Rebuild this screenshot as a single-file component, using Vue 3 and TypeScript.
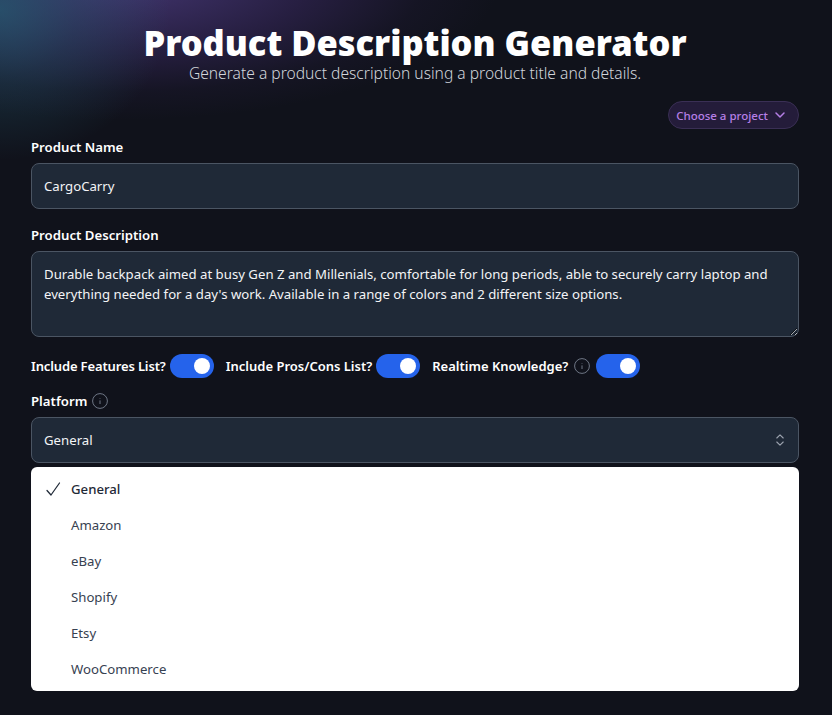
<script setup lang="ts">
const platforms = ['General', 'Amazon', 'eBay', 'Shopify', 'Etsy', 'WooCommerce']
const selected = 'General'
const description =
  "Durable backpack aimed at busy Gen Z and Millenials, comfortable for long periods, able to securely carry laptop and everything needed for a day's work. Available in a range of colors and 2 different size options."
</script>

<template>
  <div class="page">
    <header class="head">
      <h1>Product Description Generator</h1>
      <p>Generate a product description using a product title and details.</p>
    </header>

    <div class="project-row">
      <button type="button" class="project">
        <span>Choose a project</span>
        <svg width="14" height="14" viewBox="0 0 14 14" fill="none" stroke="currentColor" stroke-width="1.5" stroke-linecap="round" stroke-linejoin="round">
          <path d="M3 5 7 9 11 5" />
        </svg>
      </button>
    </div>

    <label class="label">Product Name</label>
    <input class="field" type="text" value="CargoCarry" />

    <label class="label second">Product Description</label>
    <textarea class="field area" :value="description" />

    <div class="toggles">
      <span class="toggle-label tight">Include Features List?</span>
      <span class="switch"><i /></span>
      <span class="toggle-label gap">Include Pros/Cons List?</span>
      <span class="switch"><i /></span>
      <span class="toggle-label gap">Realtime Knowledge?</span>
      <svg class="info" width="16" height="16" viewBox="0 0 16 16" fill="none" stroke="currentColor">
        <circle cx="8" cy="8" r="7.4" />
        <path d="M8 7.4v3.6M8 5v.6" />
      </svg>
      <span class="switch"><i /></span>
    </div>

    <div class="platform-label">
      <span class="platform-text">Platform</span>
      <svg class="info" width="16" height="16" viewBox="0 0 16 16" fill="none" stroke="currentColor">
        <circle cx="8" cy="8" r="7.4" />
        <path d="M8 7.4v3.6M8 5v.6" />
      </svg>
    </div>

    <div class="select-wrap">
      <button type="button" class="field select">
        <span>General</span>
        <svg width="16" height="16" viewBox="0 0 16 16" fill="none" stroke="currentColor" stroke-width="1.1" stroke-linecap="round" stroke-linejoin="round">
          <path d="M4.8 6 8 2.8 11.2 6M4.8 10 8 13.2 11.2 10" />
        </svg>
      </button>
      <ul class="menu">
        <li v-for="p in platforms" :key="p" :class="{ active: p === selected }">
          <svg v-if="p === selected" class="check" width="20" height="20" viewBox="0 0 20 20" fill="none" stroke="currentColor" stroke-width="1.25" stroke-linecap="round" stroke-linejoin="round">
            <path d="M2 11.5 6 16 14.5 4" />
          </svg>
          {{ p }}
        </li>
      </ul>
    </div>
  </div>
</template>

<style scoped>
.page {
  box-sizing: border-box;
  height: 715px;
  padding: 23px 33px 0 31px;
  overflow: hidden;
  font-family: "Noto Sans", Inter, sans-serif;
  color: #fff;
  background:
    radial-gradient(ellipse 170px 150px at 0 10px, rgba(38, 96, 118, 0.7), rgba(38, 96, 118, 0.32) 45%, rgba(38, 96, 118, 0) 100%),
    radial-gradient(ellipse 380px 140px at 120px -20px, rgba(76, 60, 128, 0.85), rgba(70, 48, 118, 0.42) 50%, rgba(60, 40, 100, 0.12) 80%, rgba(60, 40, 100, 0) 100%),
    #10121b;
}
.head { text-align: center; }
h1 {
  margin: 0;
  font-size: 34.45px;
  line-height: 40px;
  font-weight: 900;
  color: #fff;
}
.head p {
  margin: 0;
  font-size: 15.6px;
  line-height: 20px;
  font-weight: 300;
  color: #d1d5db;
}
.project-row { display: flex; justify-content: flex-end; margin-top: 18px; }
.project {
  display: flex;
  align-items: center;
  gap: 5px;
  height: 28px;
  padding: 0 11px 0 7px;
  border: 1px solid #3a2f55;
  border-radius: 14px;
  background: #241c3a;
  color: #b57fe6;
  font: 500 11.5px "Noto Sans", sans-serif;
}
.label {
  display: block;
  margin: 10px 0 8px;
  font-size: 13.2px;
  line-height: 16px;
  font-weight: 600;
}
.label.second { margin-top: 18px; }
.field {
  display: block;
  box-sizing: border-box;
  width: 100%;
  height: 46px;
  padding: 0 12px;
  border: 1px solid #4b5563;
  border-radius: 8px;
  background: #1f2937;
  color: #f3f4f6;
  font: 400 13.2px "Noto Sans", sans-serif;
  outline: none;
}
.area {
  height: 86px;
  padding: 12px;
  line-height: 20px;
  resize: vertical;
}
.toggles { display: flex; align-items: center; height: 24px; margin-top: 17px; }
.toggle-label { font-size: 13px; line-height: 16px; font-weight: 600; white-space: nowrap; }
.toggle-label.tight { letter-spacing: -0.14px; }
.toggle-label.gap { margin-left: 12px; }
.platform-text { font-size: 13.2px; line-height: 16px; font-weight: 600; }
.switch {
  display: flex;
  align-items: center;
  justify-content: flex-end;
  box-sizing: border-box;
  width: 44px;
  height: 24px;
  margin-left: 4px;
  padding-right: 4px;
  border-radius: 12px;
  background: #2563eb;
}
.switch i { width: 16px; height: 16px; border-radius: 50%; background: #fff; }
.info { flex: none; margin-left: 6px; color: #6f7786; }
.platform-label .info { margin-left: 5px; }
.toggles .info + .switch { margin-left: 6px; }
.platform-label { display: flex; align-items: center; height: 16px; margin-top: 15px; }
.select-wrap { position: relative; margin-top: 8px; }
.select {
  display: flex;
  align-items: center;
  justify-content: space-between;
  padding-right: 10px;
  text-align: left;
}
.select svg { color: #9ca3af; }
.menu {
  position: absolute;
  top: 50px;
  left: 0;
  right: 0;
  margin: 0;
  padding: 4px 0;
  list-style: none;
  border-radius: 6px;
  background: #fff;
  color: #374151;
  font-size: 13.2px;
}
.menu li {
  position: relative;
  height: 36px;
  padding-left: 40px;
  line-height: 36px;
}
.menu li.active { font-weight: 500; color: #1f2937; }
.check { position: absolute; left: 14px; top: 8px; color: #1f2937; }
</style>

<style>
html, body { background: #10121b; }
</style>
